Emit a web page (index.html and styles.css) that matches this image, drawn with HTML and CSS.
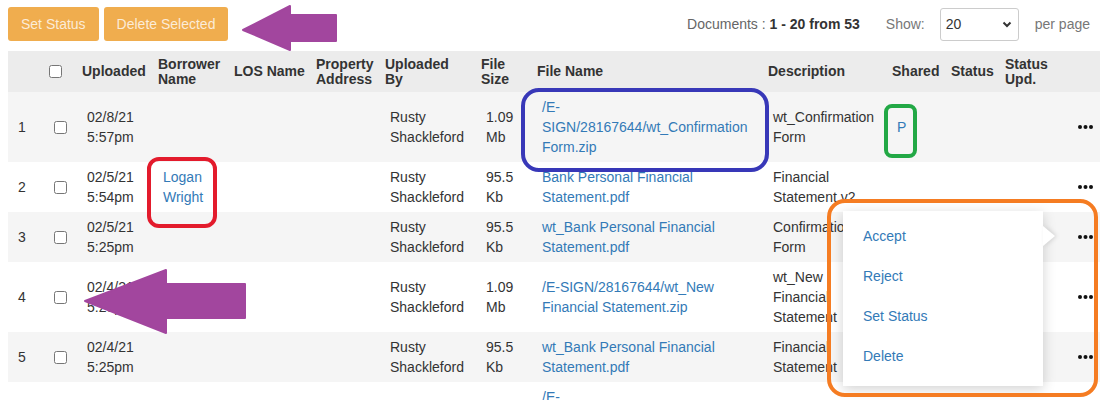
FILE: index.html
```html
<!DOCTYPE html>
<html lang="en">
<head>
    <meta charset="UTF-8">
    <meta name="viewport" content="width=device-width, initial-scale=1.0">
    <title>Documents</title>
    <link rel="stylesheet" href="styles.css">
</head>
<body>
    <div class="page">
        <div class="toolbar">
            <div class="actions">
                <button class="btn">Set Status</button>
                <button class="btn">Delete Selected</button>
            </div>
            <div class="paging">
                <span class="count">Documents : <b>1 - 20 from 53</b></span>
                <span class="show">Show:</span>
                <div class="select">
                    <span>20</span>
                    <svg width="10" height="7" viewBox="0 0 10 7"><path d="M1.5 1.5l3.5 3.5 3.5-3.5" fill="none" stroke="#333" stroke-width="2"/></svg>
                </div>
                <span class="per">per page</span>
            </div>
        </div>

        <table class="docs">
            <colgroup>
                <col style="width:38px"><col style="width:33px"><col style="width:76px"><col style="width:76px">
                <col style="width:82px"><col style="width:69px"><col style="width:96px"><col style="width:56px">
                <col style="width:231px"><col style="width:124px"><col style="width:59px"><col style="width:54px">
                <col style="width:58px"><col style="width:40px">
            </colgroup>
            <thead>
                <tr>
                    <th></th>
                    <th><input type="checkbox"></th>
                    <th>Uploaded</th>
                    <th>Borrower Name</th>
                    <th>LOS Name</th>
                    <th>Property Address</th>
                    <th>Uploaded<br>By</th>
                    <th>File Size</th>
                    <th>File Name</th>
                    <th>Description</th>
                    <th>Shared</th>
                    <th>Status</th>
                    <th>Status Upd.</th>
                    <th></th>
                </tr>
            </thead>
            <tbody>
                <tr>
                    <td class="num">1</td>
                    <td><input type="checkbox"></td>
                    <td>02/8/21 5:57pm</td>
                    <td></td><td></td><td></td>
                    <td>Rusty Shackleford</td>
                    <td>1.09 Mb</td>
                    <td><a href="#">/E-SIGN/28167644/wt_Confirmation Form.zip</a></td>
                    <td>wt_Confirmation Form</td>
                    <td><a href="#">P</a></td>
                    <td></td><td></td>
                    <td class="more"><svg width="15" height="4" viewBox="0 0 15 4"><circle cx="2" cy="2" r="2"/><circle cx="7.5" cy="2" r="2"/><circle cx="13" cy="2" r="2"/></svg></td>
                </tr>
                <tr>
                    <td class="num">2</td>
                    <td><input type="checkbox"></td>
                    <td>02/5/21 5:54pm</td>
                    <td><a href="#">Logan Wright</a></td>
                    <td></td><td></td>
                    <td>Rusty Shackleford</td>
                    <td>95.5 Kb</td>
                    <td><a href="#">Bank Personal Financial Statement.pdf</a></td>
                    <td>Financial Statement v2</td>
                    <td></td><td></td><td></td>
                    <td class="more"><svg width="15" height="4" viewBox="0 0 15 4"><circle cx="2" cy="2" r="2"/><circle cx="7.5" cy="2" r="2"/><circle cx="13" cy="2" r="2"/></svg></td>
                </tr>
                <tr>
                    <td class="num">3</td>
                    <td><input type="checkbox"></td>
                    <td>02/5/21 5:25pm</td>
                    <td></td><td></td><td></td>
                    <td>Rusty Shackleford</td>
                    <td>95.5 Kb</td>
                    <td><a href="#">wt_Bank Personal Financial Statement.pdf</a></td>
                    <td>Confirmation Form</td>
                    <td></td><td></td><td></td>
                    <td class="more"><svg width="15" height="4" viewBox="0 0 15 4"><circle cx="2" cy="2" r="2"/><circle cx="7.5" cy="2" r="2"/><circle cx="13" cy="2" r="2"/></svg></td>
                </tr>
                <tr>
                    <td class="num">4</td>
                    <td><input type="checkbox"></td>
                    <td>02/4/21 5:25pm</td>
                    <td></td><td></td><td></td>
                    <td>Rusty Shackleford</td>
                    <td>1.09 Mb</td>
                    <td><a href="#">/E-SIGN/28167644/wt_New Financial Statement.zip</a></td>
                    <td>wt_New Financial Statement</td>
                    <td></td><td></td><td></td>
                    <td class="more"><svg width="15" height="4" viewBox="0 0 15 4"><circle cx="2" cy="2" r="2"/><circle cx="7.5" cy="2" r="2"/><circle cx="13" cy="2" r="2"/></svg></td>
                </tr>
                <tr>
                    <td class="num">5</td>
                    <td><input type="checkbox"></td>
                    <td>02/4/21 5:25pm</td>
                    <td></td><td></td><td></td>
                    <td>Rusty Shackleford</td>
                    <td>95.5 Kb</td>
                    <td><a href="#">wt_Bank Personal Financial Statement.pdf</a></td>
                    <td>Financial Statement</td>
                    <td></td><td></td><td></td>
                    <td class="more"><svg width="15" height="4" viewBox="0 0 15 4"><circle cx="2" cy="2" r="2"/><circle cx="7.5" cy="2" r="2"/><circle cx="13" cy="2" r="2"/></svg></td>
                </tr>
                <tr>
                    <td></td><td></td><td></td>
                    <td></td><td></td><td></td>
                    <td></td><td></td>
                    <td><a href="#">/E-SIGN/28167644/wt_Confirmation Form.zip</a></td>
                    <td></td>
                    <td></td><td></td><td></td>
                    <td></td>
                </tr>
            </tbody>
        </table>

        <!-- row actions popup, opened on row 3 -->
        <div class="row-menu">
            <a href="#">Accept</a>
            <a href="#">Reject</a>
            <a href="#">Set Status</a>
            <a href="#">Delete</a>
        </div>

        <!-- screenshot annotations -->
        <div class="mark mark-red"></div>
        <div class="mark mark-blue"></div>
        <div class="mark mark-green"></div>
        <div class="mark mark-orange"></div>
        <svg class="arrow arrow-top" width="96" height="48" viewBox="0 0 96 48"><polygon points="1,26 48,2 48,11 94,11 94,37 48,37 48,46"/></svg>
        <svg class="arrow arrow-left" width="164" height="67" viewBox="0 0 164 67"><polygon points="1,33 82,2 82,16 161,16 161,50 82,50 82,65"/></svg>
    </div>
</body>
</html>
```

FILE: styles.css
```css
body {
    margin: 0;
    font-family: "Liberation Sans", Arial, sans-serif;
    font-size: 14px;
    color: #333;
    background-color: #fff;
}
.page {
    position: relative;
    height: 400px;
    padding-left: 8px;
    overflow: hidden;
}
a {
    color: #337ab7;
    text-decoration: none;
}

/* toolbar */
.toolbar {
    display: flex;
    justify-content: space-between;
    align-items: center;
    padding: 7px 10px 0 0;
}
.actions {
    display: flex;
    gap: 5px;
}
.btn {
    height: 34px;
    padding: 0 13px;
    border: none;
    border-radius: 3px;
    background-color: #f0ad4e;
    color: rgba(255, 255, 255, 0.78);
    font-family: "Liberation Sans", Arial, sans-serif;
    font-size: 14px;
    cursor: pointer;
}
.paging {
    display: flex;
    align-items: center;
    color: #666;
}
.count b {
    color: #333;
}
.show {
    margin-left: 26px;
    color: #777;
}
.select {
    display: flex;
    align-items: center;
    justify-content: space-between;
    box-sizing: border-box;
    width: 79px;
    height: 33px;
    margin-left: 15px;
    padding: 0 6px 0 5px;
    border: 1px solid #ccc;
    border-radius: 3px;
    color: #333;
}
.per {
    margin-left: 16px;
    color: #777;
}

/* table */
.docs {
    width: 1092px;
    margin-top: 10px;
    border-collapse: collapse;
    table-layout: fixed;
}
.docs th {
    height: 41px;
    padding: 0 3px;
    background-color: #ececec;
    line-height: 15px;
    text-align: left;
    vertical-align: middle;
}
.docs td {
    padding: 5px 8px;
    line-height: 20px;
    vertical-align: middle;
}
.docs tbody tr:nth-child(odd) td {
    background-color: #f5f5f5;
}
.docs input[type="checkbox"] {
    display: block;
    margin: 0;
}
.docs td.num {
    padding-left: 10px;
}
.docs td.more {
    padding: 5px 0 5px 18px;
}
.more svg {
    display: block;
    fill: #111;
}

/* popup menu */
.row-menu {
    position: absolute;
    left: 843px;
    top: 211px;
    width: 200px;
    padding: 5px 0 10px;
    background-color: #fff;
    box-shadow: 0 3px 12px rgba(0, 0, 0, 0.18);
}
.row-menu a {
    display: block;
    height: 40px;
    line-height: 40px;
    padding-left: 20px;
}
.row-menu::after {
    content: "";
    position: absolute;
    right: -12px;
    top: 15px;
    border-left: 12px solid #fff;
    border-top: 10px solid transparent;
    border-bottom: 10px solid transparent;
    filter: drop-shadow(2px 0 2px rgba(0, 0, 0, 0.12));
}

/* annotations */
.mark {
    position: absolute;
    box-sizing: border-box;
    border: 4px solid;
}
.mark-red {
    left: 147px;
    top: 157px;
    width: 70px;
    height: 71px;
    border-color: #e31b2c;
    border-radius: 12px;
}
.mark-blue {
    left: 521px;
    top: 88px;
    width: 248px;
    height: 84px;
    border-color: #3838b8;
    border-radius: 18px;
}
.mark-green {
    left: 884px;
    top: 104px;
    width: 33px;
    height: 54px;
    border-color: #22a845;
    border-radius: 8px;
}
.mark-orange {
    left: 827px;
    top: 199px;
    width: 271px;
    height: 198px;
    border-color: #f57c22;
    border-radius: 18px;
}
.arrow {
    position: absolute;
    fill: #a2469e;
    stroke: #a2469e;
    stroke-width: 2;
    stroke-linejoin: round;
}
.arrow-top {
    left: 242px;
    top: 4px;
}
.arrow-left {
    left: 84px;
    top: 268px;
}
```
